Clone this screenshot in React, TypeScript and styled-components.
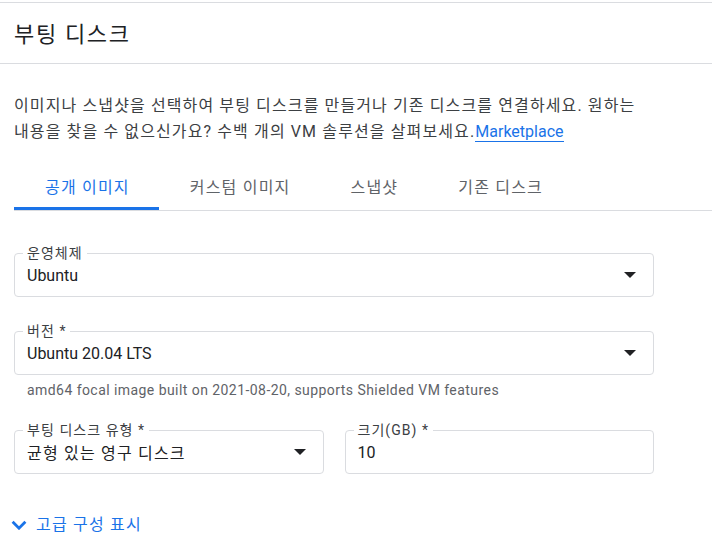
import React from 'react';
import styled, { createGlobalStyle } from 'styled-components';

const GlobalStyle = createGlobalStyle`
  body {
    margin: 0;
    background: #ffffff;
    font-family: Roboto, "Noto Sans CJK KR", sans-serif;
    color: #202124;
  }
`;

// Korean runs in the reference are set a little wider than Noto CJK
const KO_SPACING = '0.075em';

const Page = styled.div`
  padding-top: 2px;
`;

const Header = styled.header`
  height: 60px;
  display: flex;
  align-items: center;
  padding-left: 14px;
  border-top: 1px solid #dadce0;
  border-bottom: 1px solid #dadce0;
`;

const Title = styled.h1`
  margin: 0 0 2px;
  font-size: 22px;
  font-weight: 400;
  letter-spacing: ${KO_SPACING};
  color: #202124;
`;

const Content = styled.div`
  padding-left: 14px;
`;

const Intro = styled.p`
  margin: 29px 0 0;
  max-width: 640px;
  font-size: 16px;
  line-height: 26px;
  letter-spacing: 0.07em;
  color: #3c4043;
`;

const Link = styled.a`
  color: #1a73e8;
  letter-spacing: 0;
  text-decoration: none;
  border-bottom: 1px solid #1a73e8;
`;

const TabBar = styled.div`
  margin-top: 17px;
  display: flex;
  border-bottom: 1px solid #dadce0;
`;

const Tab = styled.div<{ $active?: boolean }>`
  height: 48px;
  box-sizing: border-box;
  padding: 3px 29px 0 31px;
  display: flex;
  align-items: center;
  font-size: 16px;
  letter-spacing: ${KO_SPACING};
  color: ${(p) => (p.$active ? '#1a73e8' : '#5f6368')};
  border-bottom: 3px solid ${(p) => (p.$active ? '#1a73e8' : 'transparent')};
`;

const Form = styled.div`
  width: 640px;
  margin-top: 42px;
`;

const Field = styled.div<{ $gap?: number }>`
  position: relative;
  height: 44px;
  box-sizing: border-box;
  margin-top: ${(p) => p.$gap ?? 0}px;
  padding: 0 17px 0 12px;
  display: flex;
  align-items: center;
  justify-content: space-between;
  border: 1px solid #dadce0;
  border-radius: 4px;
`;

const Label = styled.span`
  position: absolute;
  top: -10px;
  left: 8px;
  padding: 0 4px;
  background: #ffffff;
  font-size: 14px;
  line-height: 18px;
  letter-spacing: ${KO_SPACING};
  color: #3c4043;
`;

const Value = styled.span<{ $ko?: boolean }>`
  font-size: 16px;
  letter-spacing: ${(p) => (p.$ko ? KO_SPACING : '0')};
  color: #202124;
`;

const Hint = styled.div`
  margin-top: 5px;
  padding-left: 13px;
  font-size: 14px;
  line-height: 20px;
  letter-spacing: 0.44px;
  color: #5f6368;
`;

const Row = styled.div`
  margin-top: 30px;
  display: grid;
  grid-template-columns: 1fr 1fr;
  gap: 21px;
`;

const Advanced = styled.button`
  margin: 39px 0 0 -3px;
  padding: 0;
  border: 0;
  background: none;
  display: flex;
  align-items: center;
  gap: 9px;
  font-family: inherit;
  font-size: 16px;
  line-height: 24px;
  letter-spacing: ${KO_SPACING};
  color: #1a73e8;
  cursor: pointer;
`;

const Arrow = () => (
  <svg width="12" height="6" viewBox="0 0 12 6">
    <polygon points="0,0 12,0 6,6" fill="#202124" />
  </svg>
);

const Chevron = () => (
  <svg width="16" height="10" viewBox="0 0 16 10">
    <polyline
      points="1.6 1.8 8 8.2 14.4 1.8"
      fill="none"
      stroke="#1a73e8"
      strokeWidth="2.8"
    />
  </svg>
);

const tabs = ['공개 이미지', '커스텀 이미지', '스냅샷', '기존 디스크'];

export default function App() {
  return (
    <Page>
      <GlobalStyle />
      <Header>
        <Title>부팅 디스크</Title>
      </Header>
      <Content>
        <Intro>
          이미지나 스냅샷을 선택하여 부팅 디스크를 만들거나 기존 디스크를 연결하세요. 원하는
          내용을 찾을 수 없으신가요? 수백 개의 VM 솔루션을 살펴보세요.
          <Link href="#">Marketplace</Link>
        </Intro>
        <TabBar>
          {tabs.map((t, i) => (
            <Tab key={t} $active={i === 0}>
              {t}
            </Tab>
          ))}
        </TabBar>
        <Form>
          <Field>
            <Label>운영체제</Label>
            <Value>Ubuntu</Value>
            <Arrow />
          </Field>
          <Field $gap={34}>
            <Label>버전 *</Label>
            <Value>Ubuntu 20.04 LTS</Value>
            <Arrow />
          </Field>
          <Hint>amd64 focal image built on 2021-08-20, supports Shielded VM features</Hint>
          <Row>
            <Field>
              <Label>부팅 디스크 유형 *</Label>
              <Value $ko>균형 있는 영구 디스크</Value>
              <Arrow />
            </Field>
            <Field>
              <Label>크기(GB) *</Label>
              <Value>10</Value>
            </Field>
          </Row>
        </Form>
        <Advanced>
          <Chevron />
          고급 구성 표시
        </Advanced>
      </Content>
    </Page>
  );
}
